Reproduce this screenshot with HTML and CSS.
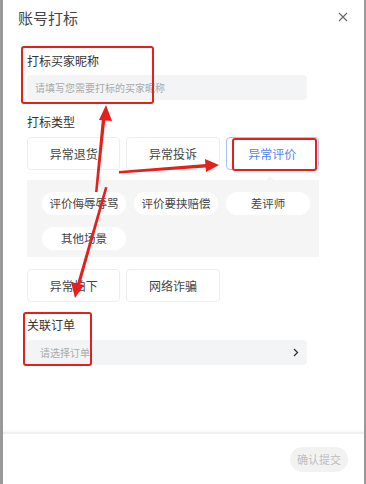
FILE: index.html
```html
<!DOCTYPE html>
<html lang="zh-CN">
<head>
  <meta charset="UTF-8">
  <meta name="viewport" content="width=device-width, initial-scale=1.0">
  <title>账号打标</title>
  <link rel="stylesheet" href="styles.css">
</head>
<body>
  <div class="modal">
    <div class="modal-header">
      <span class="modal-title">账号打标</span>
      <svg class="close" width="10" height="10" viewBox="0 0 10 10">
        <path d="M1 1L9 9M9 1L1 9" stroke="#666" stroke-width="1.1" fill="none"/>
      </svg>
    </div>

    <div class="modal-body">
      <div class="field first">
        <div class="label">打标买家昵称</div>
        <div class="input">请填写您需要打标的买家昵称</div>
      </div>

      <div class="field type">
        <div class="label">打标类型</div>
        <div class="options">
          <div class="option">异常退货</div>
          <div class="option">异常投诉</div>
          <div class="option active">异常评价</div>
        </div>
        <div class="sub-panel">
          <div class="pill">评价侮辱辱骂</div>
          <div class="pill">评价要挟赔偿</div>
          <div class="pill">差评师</div>
          <div class="pill">其他场景</div>
        </div>
        <div class="options lower">
          <div class="option">异常拍下</div>
          <div class="option">网络诈骗</div>
        </div>
      </div>

      <div class="field order">
        <div class="label">关联订单</div>
        <div class="input select">
          <span>请选择订单</span>
          <svg width="6" height="9" viewBox="0 0 6 9">
            <path d="M1 1L4.5 4.5L1 8" stroke="#333" stroke-width="1.3" fill="none"/>
          </svg>
        </div>
      </div>
    </div>

    <div class="modal-footer">
      <div class="submit">确认提交</div>
    </div>
  </div>

  <!-- annotation marks drawn over the screenshot -->
  <svg class="marks" width="366" height="484" viewBox="0 0 366 484">
    <g fill="none" stroke="#e3201b" stroke-width="2">
      <rect x="22" y="47" width="131" height="56" rx="2"/>
      <rect x="233" y="139" width="83" height="31" rx="2"/>
      <rect x="24" y="313" width="67" height="52" rx="2"/>
    </g>
    <g fill="#e3201b">
      <polygon points="95,192 97.5,192 105.5,118 102,118"/>
      <polygon points="106,105 99,120 112,121"/>
      <polygon points="119,171 119,173.5 206,167.5 206,164"/>
      <polygon points="219,165 205,159 206,172"/>
      <polygon points="105,187 107.5,187.5 80,285 77,284"/>
      <polygon points="75,298 71,282 84,285"/>
    </g>
  </svg>
</body>
</html>
```

FILE: styles.css
```css
body {
  margin: 0;
  padding-left: 3px;
  background-color: #9a9a9a;
  font-family: "Noto Sans CJK SC", "Noto Sans", sans-serif;
  color: #444;
}
.modal {
  position: relative;
  width: 361px;
  height: 484px;
  background: #fff;
  display: flex;
  flex-direction: column;
}
.modal-header {
  height: 34px;
  padding: 0 16px 0 15px;
  display: flex;
  align-items: center;
  justify-content: space-between;
}
.modal-title {
  font-size: 15px;
  color: #444;
}
.modal-body {
  padding: 0 42px 0 24px;
  flex: 1;
}
.field {
  margin-top: 10px;
}
.field.first {
  margin-top: 18px;
}
.field.type {
  margin-top: 13px;
}
.label {
  font-size: 12px;
  line-height: 18px;
  color: #333;
}
.input {
  margin-top: 5px;
  width: 280px;
  height: 25px;
  box-sizing: border-box;
  padding-left: 8px;
  background: #f3f4f6;
  border-radius: 4px;
  font-size: 10px;
  line-height: 25px;
  color: #aaa;
}
.options {
  margin-top: 6px;
  width: 292px;
  display: grid;
  grid-template-columns: repeat(3, 1fr);
  gap: 6px;
}
.options.lower {
  margin-top: 12px;
}
.option {
  height: 33px;
  box-sizing: border-box;
  border: 1px solid #eceef0;
  border-radius: 4px;
  background: #fff;
  font-size: 12px;
  line-height: 31px;
  text-align: center;
  color: #444;
}
.option.active {
  border-color: #a9c1f3;
  color: #5585ef;
}
.sub-panel {
  position: relative;
  margin-top: 10px;
  width: 292px;
  box-sizing: border-box;
  padding: 12px 9px 7px 15px;
  background: #f5f5f6;
  display: grid;
  grid-template-columns: repeat(3, 84px);
  gap: 12px 8px;
}
.sub-panel::before {
  content: "";
  position: absolute;
  top: -4px;
  left: 239px;
  border: 4px solid transparent;
  border-top: 0;
  border-bottom-color: #f5f5f6;
}
.pill {
  height: 23px;
  background: #fff;
  border-radius: 12px;
  font-size: 11.5px;
  line-height: 23px;
  text-align: center;
  color: #444;
}
.field.order {
  margin-top: 14px;
}
.select {
  margin-top: 6px;
  padding: 0 8px 0 13px;
  display: flex;
  align-items: center;
  justify-content: space-between;
}
.modal-footer {
  border-top: 2px solid #eeeff0;
  box-shadow: 0 -1px 3px rgba(0, 0, 0, 0.04);
  height: 50px;
  padding: 0 16px;
  display: flex;
  align-items: center;
  justify-content: flex-end;
}
.submit {
  width: 58px;
  height: 25px;
  border-radius: 13px;
  background: #f2f2f3;
  font-size: 11px;
  line-height: 25px;
  text-align: center;
  color: #bdbdbd;
}
.marks {
  position: absolute;
  top: 0;
  left: 0;
}
```
